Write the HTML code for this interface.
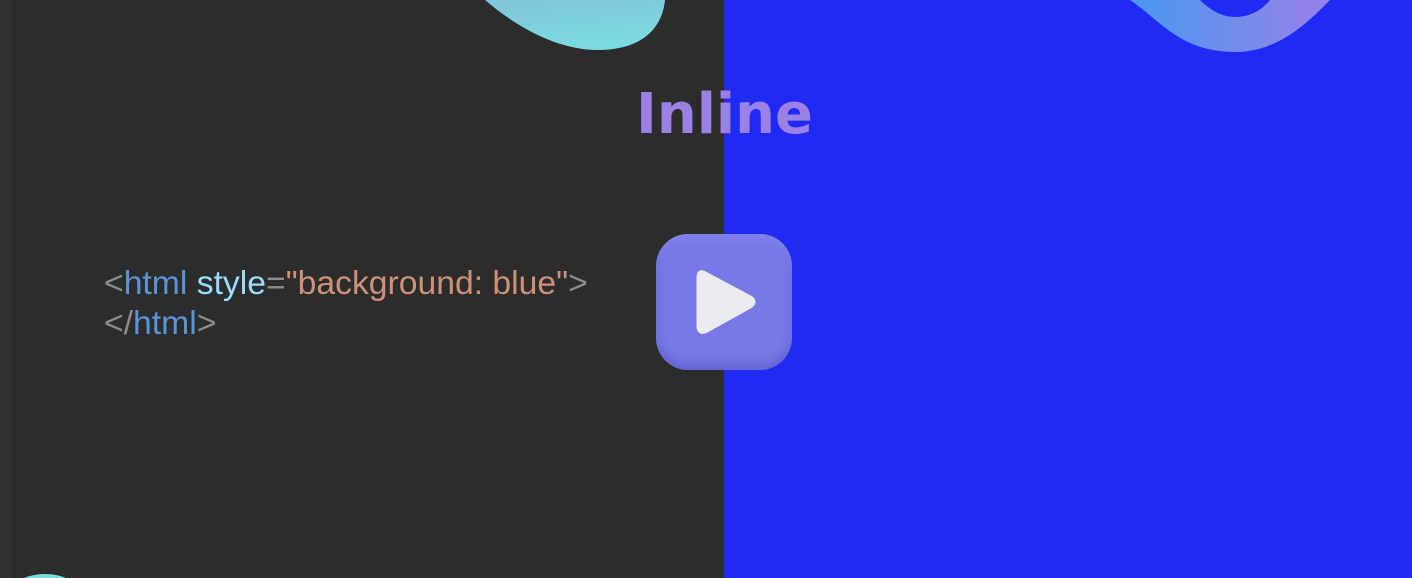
<!DOCTYPE html>
<html><head><meta charset="utf-8"><style>
body{margin:0;width:1412px;height:578px;overflow:hidden;position:relative;background:#2c2c2c;font-family:"Liberation Sans",sans-serif}
.strip{position:absolute;left:0;top:0;width:12px;height:578px;background:#303133}
.right{position:absolute;left:724px;top:0;width:688px;height:578px;background:#1f2af3}
.title{position:absolute;left:636px;top:75px;font-family:"DejaVu Sans",sans-serif;font-size:56px;font-weight:bold;color:#9b80e6;line-height:80px}
.code{position:absolute;left:104px;top:263px;font-size:33.7px;line-height:40px;color:#8c8c8c;white-space:pre}
.t{color:#5a95d6}.a{color:#9cdcfe}.s{color:#ce9178}
.btn{position:absolute;left:656px;top:234px;width:136px;height:136px;border-radius:32px;background:#7878e6;box-shadow:inset 0 -6px 10px rgba(60,60,170,.35),inset 0 4px 8px rgba(160,160,255,.4)}
</style></head><body>
<div class="strip"></div>
<div class="right"></div>
<svg style="position:absolute;left:0;top:0" width="1412" height="578">
<defs>
<linearGradient id="g1" x1="0" y1="0" x2="0.3" y2="1"><stop offset="0" stop-color="#82c4dc"/><stop offset="1" stop-color="#7adbe0"/></linearGradient>
<linearGradient id="g2" x1="0" y1="0" x2="1" y2="0"><stop offset="0" stop-color="#4898f0"/><stop offset="1" stop-color="#9a80e8"/></linearGradient>
</defs>
<path d="M485 0 C520 30 560 50 598 50 C640 50 662 30 665 0 Z" fill="url(#g1)"/>
<path d="M1130 0 C1160 20 1180 52 1235 52 C1280 52 1310 20 1330 0 L1270 0 C1262 10 1250 17 1235 17 C1222 17 1210 10 1200 0 Z" fill="url(#g2)"/>
<ellipse cx="45" cy="588" rx="30" ry="14" fill="#7adbe0"/>
</svg>
<div class="title">Inline</div>
<div class="code">&lt;<span class="t">html</span> <span class="a">style</span>=<span class="s">"background: blue"</span>&gt;
&lt;/<span class="t">html</span>&gt;</div>
<div class="btn"></div>
<svg style="position:absolute;left:656px;top:234px" width="136" height="136">
<path d="M49 40 Q43 36 43 44 L43 92 Q43 100 51 96 L94 72 Q100 68 94 64 Z" fill="#ececf0" stroke="#ececf0" stroke-width="5" stroke-linejoin="round"/>
</svg>
</body></html>
